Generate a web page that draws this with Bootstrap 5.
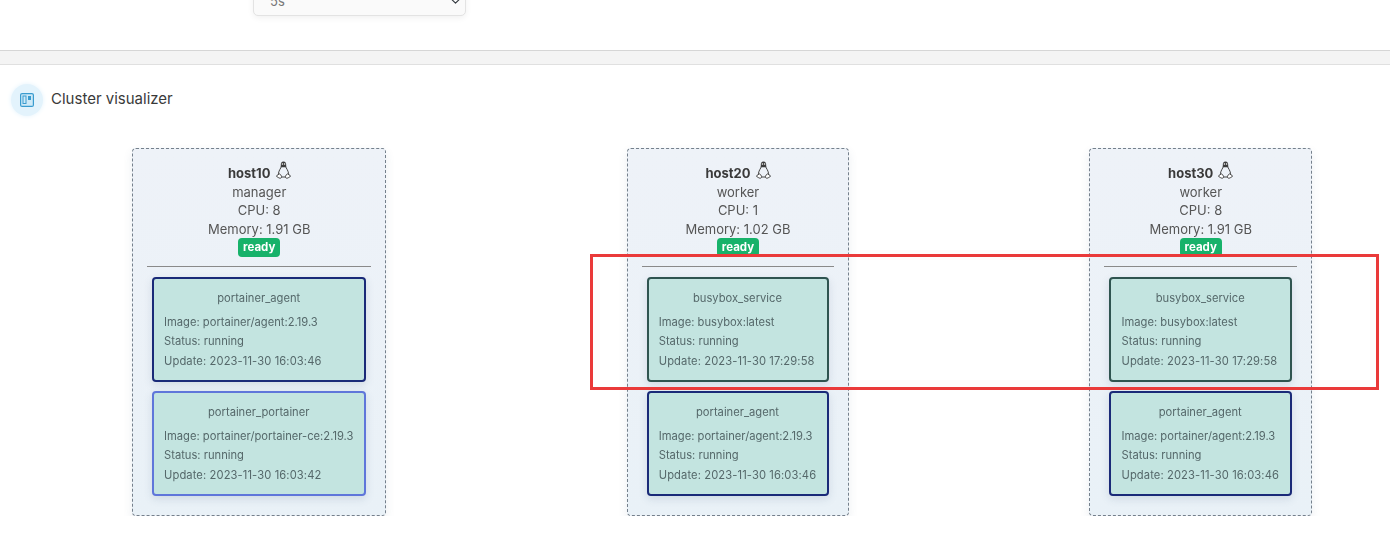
<!DOCTYPE html>
<html lang="en">
<head>
  <meta charset="UTF-8" />
  <title>Cluster visualizer</title>
  <link href="https://cdn.jsdelivr.net/npm/bootstrap@5.3.0/dist/css/bootstrap.min.css" rel="stylesheet">
  <style>
    body {
      font-family: Inter, "Liberation Sans", sans-serif;
      background: #fff;
      color: #555;
      overflow: hidden;
    }

    .top-area {
      display: flow-root;
      height: 50px;
      padding-left: 253px;
    }

    .top-area .form-select {
      width: 213px;
      height: 34px;
      margin-top: -18px;
      font-size: 13px;
      padding: 6px 36px 0 16px;
      color: #777;
      background-color: #fafafa;
      background-size: 11px 9px;
      background-position: right 4px top 14px;
      border-color: #e3e3e3;
      border-radius: 5px;
      box-shadow: 0 2px 6px rgba(0, 0, 0, 0.06);
    }

    .band {
      height: 15px;
      background: #f4f4f4;
      border-top: 1px solid #d6d6d6;
      border-bottom: 1px solid #e0e0e0;
    }

    .widget-head {
      height: 83px;
      padding-left: 11px;
      padding-bottom: 14px;
    }

    .icon-circle {
      width: 32px;
      height: 32px;
      background: #e3f3fc;
      box-shadow: 0 0 5px #e3f3fc;
    }

    .widget-title {
      font-size: 15px;
      color: #3a3a3a;
      margin-left: 8px;
    }

    .cluster {
      padding-left: 132px;
      padding-right: 78px;
      filter: blur(0.3px);
    }

    .host-box {
      height: 368px;
      padding: 12px 14px 0;
      background: linear-gradient(to bottom, #eef2f8, #e9f1f7);
      border: 1px dashed #75808c;
      border-radius: 4px;
      box-shadow: 0 4px 10px rgba(60, 90, 120, 0.1);
      font-size: 13px;
      line-height: 18.5px;
      text-align: center;
    }

    .host-name {
      font-weight: 700;
      color: #3a3a3a;
    }

    .tux {
      width: 15px;
      height: 18px;
      margin-left: 2px;
      vertical-align: -1px;
    }

    .ready-tag {
      display: block;
      width: fit-content;
      margin: 0 auto;
      padding: 3px 5px;
      font-size: 11.5px;
      line-height: 13px;
      font-weight: 700;
      background: #17b26a;
      color: #fff;
      border-radius: 4px;
    }

    .host-rule {
      margin: 9px 0 10px;
      border: 0;
      border-top: 1px solid #8a8a8a;
      opacity: 1;
    }

    .task-box {
      height: 105px;
      min-width: 181px;
      margin: 0 5px 9px;
      padding: 10px 11px 0 10px;
      background: #c3e4e0;
      border: 2px solid #1a2a78;
      border-radius: 4px;
      box-shadow: 0 3px 8px rgba(60, 90, 120, 0.15);
      font-size: 11.2px;
      line-height: 19.5px;
      text-align: left;
      color: #55686a;
      white-space: nowrap;
    }

    .task-box.service { border-color: #2f5450; }
    .task-box.light { border-color: #5f76da; }

    .task-name {
      text-align: center;
      margin-bottom: 4px;
    }

    .task-time {
      letter-spacing: 0.1px;
    }

    .mark-frame {
      position: absolute;
      left: 590px;
      top: 254px;
      width: 789px;
      height: 136px;
      border: 3px solid #ea3a3a;
      pointer-events: none;
    }
  </style>
</head>
<body>
  <svg width="0" height="0" class="position-absolute">
    <symbol id="tux" viewBox="0 0 15 18">
      <path d="M7.500.6C5.500.6 4.800 2.200 4.800 3.800c0 1.100.1 1.700-.3 2.500h6c-.4-.8-.3-1.400-.3-2.500C10.200 2.200 9.500.6 7.500.6z" fill="#3c3c3c"/>
      <path d="M5.400 5.400c-.4 1.700-2.500 3.900-2.900 6.800-.1.800 0 1.400.3 1.900M9.600 5.400c.4 1.700 2.500 3.900 2.900 6.800.1.800 0 1.400-.3 1.900M5.200 16h4.600" fill="none" stroke="#444" stroke-width="1"/>
      <path d="M.9 14.500c.9-.3 1.500-1.400 2.400-1.600.9-.1 1.900 1.500 2.300 2.700.2.800-.5 1.600-1.400 1.600-1.200 0-2.200-1-3.300-1.500-.5-.3-.5-1 0-1.200zM14.100 14.500c-.9-.3-1.500-1.400-2.400-1.600-.9-.1-1.900 1.500-2.300 2.700-.2.800.5 1.600 1.400 1.600 1.200 0 2.200-1 3.300-1.500.5-.3.5-1 0-1.200z" fill="#fff" stroke="#3c3c3c" stroke-width="1"/>
      <circle cx="6.400" cy="3" r=".8" fill="#fff"/>
      <circle cx="8.600" cy="3" r=".8" fill="#fff"/>
    </symbol>
  </svg>

  <div class="top-area">
    <select class="form-select">
      <option>5s</option>
    </select>
  </div>
  <div class="band"></div>

  <div class="widget-head d-flex align-items-center">
    <div class="icon-circle rounded-circle d-flex align-items-center justify-content-center">
      <svg width="14" height="14" viewBox="0 0 14 14">
        <rect x=".6" y=".6" width="12.800" height="12.800" rx="1.500" fill="#cfeaf8" stroke="#3a9ccf" stroke-width="1.200"/>
        <rect x="3" y="3" width="3" height="7.500" fill="none" stroke="#3a9ccf" stroke-width="1"/>
        <rect x="8" y="3" width="3" height="4" fill="#3a9ccf"/>
      </svg>
    </div>
    <span class="widget-title">Cluster visualizer</span>
  </div>

  <div class="cluster d-flex justify-content-between align-items-start" id="cluster"></div>
  <div class="mark-frame"></div>

  <script>
    const agent = { name: "portainer_agent", image: "portainer/agent:2.19.3", update: "2023-11-30 16:03:46", style: "" };
    const busybox = { name: "busybox_service", image: "busybox:latest", update: "2023-11-30 17:29:58", style: "service" };
    const ui = { name: "portainer_portainer", image: "portainer/portainer-ce:2.19.3", update: "2023-11-30 16:03:42", style: "light" };

    const hosts = [
      { name: "host10", role: "manager", cpu: 8, memory: "1.91 GB", tasks: [agent, ui] },
      { name: "host20", role: "worker", cpu: 1, memory: "1.02 GB", tasks: [busybox, agent] },
      { name: "host30", role: "worker", cpu: 8, memory: "1.91 GB", tasks: [busybox, agent] }
    ];

    document.getElementById("cluster").innerHTML = hosts.map(h => `
      <div class="host-box">
        <div class="host-name">${h.name} <svg class="tux"><use href="#tux"/></svg></div>
        <div>${h.role}</div>
        <div>CPU: ${h.cpu}</div>
        <div>Memory: ${h.memory}</div>
        <span class="ready-tag">ready</span>
        <hr class="host-rule">
        ${h.tasks.map(t => `
          <div class="task-box ${t.style}">
            <div class="task-name">${t.name}</div>
            <div>Image: ${t.image}</div>
            <div>Status: running</div>
            <div class="task-time">Update: ${t.update}</div>
          </div>`).join("")}
      </div>`).join("");
  </script>
  <script src="https://cdn.jsdelivr.net/npm/bootstrap@5.3.0/dist/js/bootstrap.bundle.min.js"></script>
</body>
</html>
